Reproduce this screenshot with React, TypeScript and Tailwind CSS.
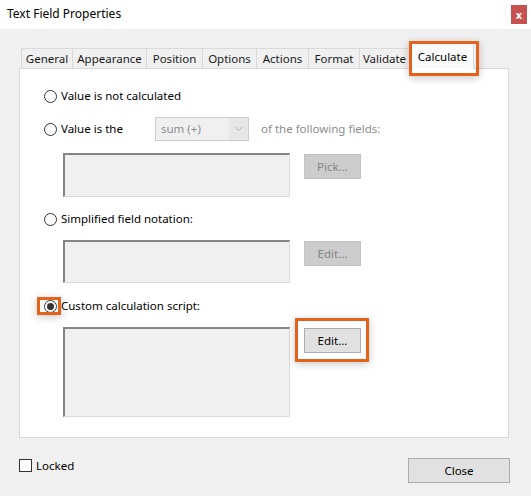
import React from 'react';

const tabs = [
  { label: 'General', w: 'w-[51px]' },
  { label: 'Appearance', w: 'w-[74px]' },
  { label: 'Position', w: 'w-[56px]' },
  { label: 'Options', w: 'w-[54px]' },
  { label: 'Actions', w: 'w-[52px]' },
  { label: 'Format', w: 'w-[51px]' },
  { label: 'Validate', w: 'w-[50px]' },
];

function Radio({ checked = false }: { checked?: boolean }) {
  return (
    <span className="w-[13px] h-[13px] rounded-full border border-[#333333] bg-white flex items-center justify-center shrink-0">
      {checked && <span className="w-[7px] h-[7px] rounded-full bg-[#333333]" />}
    </span>
  );
}

function FieldBox({ h }: { h: string }) {
  return (
    <div
      className={`w-[227px] ${h} bg-[#f0f0f0] border-t-2 border-l-2 border-r border-b border-t-[#858585] border-l-[#858585] border-r-[#dcdcdc] border-b-[#dcdcdc]`}
    />
  );
}

function DisabledButton({ label }: { label: string }) {
  return (
    <div className="w-[57px] h-[25px] bg-[#cccccc] border border-[#c2c2c2] text-[#858585] flex items-center justify-center">
      {label}
    </div>
  );
}

export default function App() {
  return (
    <div
      className="w-[531px] h-[496px] bg-[#f0f0f0] text-[11.5px] text-black overflow-hidden"
      style={{ fontFamily: '"Noto Sans", "Open Sans", sans-serif' }}
    >
      {/* title bar */}
      <div className="h-[29px] bg-white flex items-center justify-between pl-[7px] pr-[4px]">
        <span className="leading-none -mt-[1px] text-[12px]">Text Field Properties</span>
        <span className="w-[16px] h-[19px] bg-[#c75050] text-white text-[11px] font-bold flex items-center justify-center leading-none -mt-[1px]">
          x
        </span>
      </div>

      <div className="pl-[19px] pt-[11px]">
        {/* tab strip */}
        <div className="flex items-end h-[28px] pl-[2px]">
          {tabs.map((t) => (
            <div
              key={t.label}
              className={`${t.w} h-[20px] bg-[#f0f0f0] border-t border-l border-[#d9d9d9] last:border-r flex items-center justify-center text-[#1a1a1a]`}
            >
              {t.label}
            </div>
          ))}
          <div className="relative ml-[2px] w-[63px] h-[26px] bg-[#fafafa] border-t border-l border-r border-[#d9d9d9] flex items-start justify-center pt-[4px] z-10 -mb-[1px]">
            Calculate
            <span className="absolute -left-[3px] -top-[3px] w-[70px] h-[35px] border-[3px] border-[#e4621c] shadow-[0_2px_8px_rgba(0,0,0,0.22)]" />
          </div>
        </div>

        {/* tab panel */}
        <div className="w-[490px] h-[370px] bg-white border border-[#d9d9d9] pt-[17px] pl-[24px] flex flex-col">
          <div className="h-[20px] flex items-center gap-[4px]">
            <Radio />
            <span>Value is not calculated</span>
          </div>

          <div className="mt-[11px] h-[24px] flex items-center">
            <div className="w-[111px] flex items-center gap-[4px]">
              <Radio />
              <span>Value is the</span>
            </div>
            <div className="w-[94px] h-[24px] border border-[#cccccc] bg-[#e6e6e6] flex items-stretch">
              <div className="w-[73px] bg-[#f0f0f0] text-[#8c8c8c] flex items-center pl-[5px]">sum (+)</div>
              <div className="flex-1 flex items-center justify-center">
                <svg width="9" height="6" viewBox="0 0 9 6" fill="none">
                  <path d="M1 1l3.5 3.5L8 1" stroke="#b5b5b5" strokeWidth="1" />
                </svg>
              </div>
            </div>
            <span className="ml-[12px] text-[#8c8c8c]">of the following fields:</span>
          </div>

          <div className="mt-[12px] ml-[19px] flex items-start gap-[14px]">
            <FieldBox h="h-[44px]" />
            <div className="mt-[1px]">
              <DisabledButton label="Pick..." />
            </div>
          </div>

          <div className="mt-[12px] h-[20px] flex items-center gap-[4px]">
            <Radio />
            <span>Simplified field notation:</span>
          </div>

          <div className="mt-[11px] ml-[19px] flex items-start gap-[14px]">
            <FieldBox h="h-[43px]" />
            <div className="mt-[1px]">
              <DisabledButton label="Edit..." />
            </div>
          </div>

          <div className="mt-[13px] h-[20px] flex items-center gap-[4px]">
            <span className="relative">
              <Radio checked />
              <span className="absolute -left-[7px] -top-[3px] w-[24px] h-[18px] border-[3px] border-[#e4621c] shadow-[0_2px_8px_rgba(0,0,0,0.22)]" />
            </span>
            <span>Custom calculation script:</span>
          </div>

          <div className="mt-[11px] ml-[19px] flex items-start gap-[14px]">
            <FieldBox h="h-[90px]" />
            <div className="relative mt-[1px]">
              <div className="w-[57px] h-[25px] bg-[#e1e1e1] border border-[#adadad] flex items-center justify-center">
                Edit...
              </div>
              <span className="absolute -left-[9px] -top-[10px] w-[74px] h-[44px] border-[3px] border-[#e4621c] shadow-[0_2px_8px_rgba(0,0,0,0.22)]" />
            </div>
          </div>
        </div>

        {/* footer */}
        <div className="mt-[20px] w-[491px] flex items-start justify-between">
          <div className="flex items-center gap-[4px] mt-[1px]">
            <span className="w-[13px] h-[13px] border border-[#333333] bg-white" />
            <span className="leading-none">Locked</span>
          </div>
          <div className="w-[102px] h-[25px] bg-[#e1e1e1] border border-[#adadad] flex items-center justify-center">
            Close
          </div>
        </div>
      </div>
    </div>
  );
}
